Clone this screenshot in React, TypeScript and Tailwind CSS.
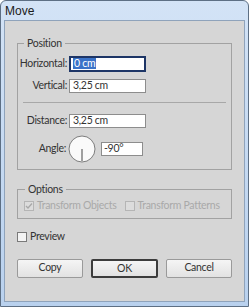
const font = "font-['Lato','Liberation_Sans',sans-serif]"
const txt = "text-[10.5px] tracking-[-0.3px] whitespace-nowrap"

const Label = ({ children, w }: { children: string; w: string }) => (
  <div className={`${w} shrink-0 flex justify-end pr-[2px]`}>
    <span className={`text-[#333] ${txt}`}>{children}</span>
  </div>
)

const Field = ({ label, value, focused }: { label: string; value: string; focused?: boolean }) => (
  <div className="flex items-center h-[15px]">
    <Label w="w-[46px]">{label}</Label>
    <div
      className={
        focused
          ? "w-[77px] h-[16px] bg-white border-[2px] border-[#1d3566] flex items-center pl-[2px]"
          : "w-[77px] h-[14px] bg-white border border-[#8d8d8d] flex items-center pl-[3px]"
      }
    >
      {focused ? (
        <span className={`bg-[#3b73c8] text-white leading-[11px] px-[1px] ${txt}`}>{value}</span>
      ) : (
        <span className={`text-[#333] leading-none ${txt}`}>{value}</span>
      )}
    </div>
  </div>
)

const Check = ({ label, checked, disabled }: { label: string; checked?: boolean; disabled?: boolean }) => (
  <div className="flex items-center gap-[3px]">
    <div
      className={
        "w-[10px] h-[10px] border flex items-center justify-center " +
        (disabled ? "border-[#b5b5b5] bg-[#dcdcdc]" : "border-[#7a7a7a] bg-[#f4f4f4]")
      }
    >
      {checked && (
        <svg width="8" height="8" viewBox="0 0 8 8">
          <path d="M1 4 L3 6 L7 1.5" fill="none" stroke="#a8a8a8" strokeWidth="1.3" />
        </svg>
      )}
    </div>
    <span className={`${txt} ${disabled ? "text-[#a9a9a9]" : "text-[#333]"}`}>{label}</span>
  </div>
)

const Btn = ({ label, primary }: { label: string; primary?: boolean }) => (
  <button
    className={
      `h-[19px] text-[#333] rounded-[2px] bg-gradient-to-b from-[#f5f5f5] to-[#e2e2e2] ${txt} ` +
      (primary ? "w-[67px] border-[2px] border-[#3c3c3c]" : "w-[66px] border border-[#9a9a9a]")
    }
  >
    {label}
  </button>
)

export default function App() {
  return (
    <div className={`w-[250px] h-[307px] ${font} bg-white`}>
      <div className="w-[249px] h-[307px] rounded-t-[6px] border border-[#5d6f84] bg-gradient-to-b from-[#d3e3f6] to-[#b9d1ee] flex flex-col px-[3px] pb-[4px]">
        <div className="h-[19px] flex items-center pl-[1px] text-[12px] text-[#1b1b1b] font-['Liberation_Sans',sans-serif]">Move</div>
        <div className="flex-1 bg-[#d6d6d6] border border-[#8fa3bb] flex flex-col px-[12px] pt-[16px]">
          <fieldset className="border border-[#a2a2a2] px-[5px] pb-[6px]">
            <legend className={`px-[3px] ml-[1px] text-[#333] leading-[12px] ${txt}`}>Position</legend>
            <div className="flex flex-col gap-[7px] pt-[7px]">
              <Field label="Horizontal:" value="0 cm" focused />
              <Field label="Vertical:" value="3,25 cm" />
            </div>
            <div className="h-px bg-[#a8a8a8] mt-[9px] mb-[10px]" />
            <Field label="Distance:" value="3,25 cm" />
            <div className="flex items-center mt-[7px]">
              <Label w="w-[45px]">Angle:</Label>
              <svg width="28" height="28" viewBox="0 0 28 28">
                <circle cx="14" cy="14" r="13" fill="#fafafa" stroke="#7d7d7d" strokeWidth="1" />
                <line x1="14" y1="14" x2="14" y2="26" stroke="#444" strokeWidth="1" />
              </svg>
              <div className={`ml-[5px] w-[42px] h-[14px] bg-white border border-[#8d8d8d] flex items-center pl-[2px] text-[#333] ${txt}`}>
                -90°
              </div>
            </div>
          </fieldset>
          <fieldset className="mt-[13px] border border-[#a2a2a2] px-[6px] pb-[4px]">
            <legend className={`px-[3px] ml-[1px] text-[#333] leading-[12px] ${txt}`}>Options</legend>
            <div className="flex items-center gap-[8px] pt-[3px]">
              <Check label="Transform Objects" checked disabled />
              <Check label="Transform Patterns" disabled />
            </div>
          </fieldset>
          <div className="mt-[10px]">
            <Check label="Preview" />
          </div>
          <div className="mt-[14px] flex items-center justify-between">
            <Btn label="Copy" />
            <Btn label="OK" primary />
            <Btn label="Cancel" />
          </div>
        </div>
      </div>
    </div>
  )
}
